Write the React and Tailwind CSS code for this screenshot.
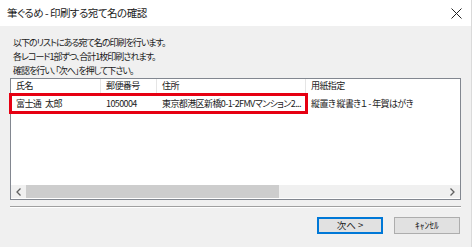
import React from 'react';

const font = { fontFamily: '"Noto Sans CJK JP", "Noto Sans", sans-serif', fontFeatureSettings: '"palt"' };

const columns = [
  { label: '氏名', width: 'w-[90px]', value: '富士通\u2002太郎' },
  { label: '郵便番号', width: 'w-[56px]', value: '1050004' },
  { label: '住所', width: 'w-[149px]', value: '東京都港区新橋0-1-2FMVマンション2...' },
  { label: '用紙指定', width: 'flex-1', value: '縦置き 縦書き１ - 年賀はがき' },
];

function Button({ children, primary }) {
  return (
    <button
      type="button"
      className={
        'w-[66px] h-[17px] bg-[#e1e1e1] text-[9.5px] leading-none text-[#222] flex items-center justify-center ' +
        (primary ? 'border-2 border-[#0078d7]' : 'border border-[#adadad]')
      }
    >
      {children}
    </button>
  );
}

export default function App() {
  return (
    <div className="w-[472px] h-[247px] bg-[#f0f0f0] text-[#1a1a1a] flex flex-col border-r border-[#dadada]" style={font}>
      {/* title bar */}
      <div className="h-[26px] bg-white flex items-center justify-between pl-[7px] pr-[10px] shrink-0">
        <span className="text-[10.5px] tracking-[-0.5px]">筆ぐるめ - 印刷する宛て名の確認</span>
        <svg width="11" height="11" viewBox="0 0 11 11" className="mr-[-1px]">
          <path d="M0.5 0.5 L10.5 10.5 M10.5 0.5 L0.5 10.5" stroke="#222" strokeWidth="1" />
        </svg>
      </div>

      <div className="flex-1 flex flex-col px-[10px] pt-[10px]">
        <div className="pl-[3px] text-[9px] leading-[14px] tracking-[-1px]">
          <p>以下のリストにある宛て名の印刷を行います。</p>
          <p>各レコード1部ずつ、合計1枚印刷されます。</p>
          <p>確認を行い、「次へ」を押して下さい。</p>
        </div>

        {/* list view */}
        <div className="relative h-[122px] bg-white border border-[#828790] flex flex-col text-[9px] tracking-[-0.6px]">
          <div className="flex h-[14px] shrink-0">
            {columns.map((c, i) => (
              <div key={c.label} className={`${c.width} pl-[5px] flex items-center ${i < columns.length - 1 ? 'border-r border-[#e5e5e5]' : ''}`}>
                {c.label}
              </div>
            ))}
          </div>
          <div className="flex h-[18px] mt-[2px] shrink-0">
            {columns.map((c) => (
              <div key={c.label} className={`${c.width} pl-[5px] flex items-center whitespace-nowrap overflow-hidden`}>
                {c.value}
              </div>
            ))}
          </div>
          <div className="flex-1" />
          {/* horizontal scrollbar */}
          <div className="h-[13px] bg-[#f0f0f0] flex items-center mb-[1px]">
            <div className="w-[15px] flex justify-center">
              <svg width="5" height="8" viewBox="0 0 5 8"><path d="M4.5 0.5 L1 4 L4.5 7.5" fill="none" stroke="#606060" strokeWidth="1.3" /></svg>
            </div>
            <div className="w-[253px] h-[13px] bg-[#cdcdcd]" />
            <div className="flex-1" />
            <div className="w-[15px] flex justify-center">
              <svg width="5" height="8" viewBox="0 0 5 8"><path d="M0.5 0.5 L4 4 L0.5 7.5" fill="none" stroke="#606060" strokeWidth="1.3" /></svg>
            </div>
          </div>
          {/* highlight annotation */}
          <div className="absolute left-[-2px] top-[14px] w-[299px] h-[21px] border-[3px] border-[#e60012]" />
        </div>

        <div className="mt-[6px] border-t border-[#a0a0a0] border-b border-b-white h-0" />

        <div className="flex justify-end gap-[11px] mt-[9px] pr-[1px]">
          <Button primary>次へ &gt;</Button>
          <Button>ｷｬﾝｾﾙ</Button>
        </div>
      </div>
    </div>
  );
}
